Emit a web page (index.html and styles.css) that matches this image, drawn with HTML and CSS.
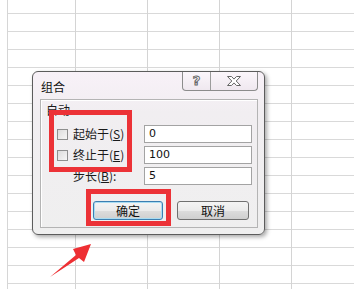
FILE: index.html
```html
<!DOCTYPE html>
<html lang="zh">
<head>
    <meta charset="utf-8">
    <title>组合</title>
    <link rel="stylesheet" href="styles.css">
</head>
<body>
    <div class="screen">
        <div class="sheet"></div>

        <section class="dialog">
            <div class="titlebar">
                <span class="title">组合</span>
                <div class="title_buttons">
                    <span class="help">?</span>
                    <span class="close">
                        <svg width="16" height="10" viewBox="0 0 16 10">
                            <path d="M1.5 0.5h4l2.5 2.6 2.5-2.6h4l-4.3 4.5 4.3 4.5h-4l-2.5-2.6-2.5 2.6h-4l4.3-4.5z" fill="#fff" stroke="#666" stroke-width="1"/>
                        </svg>
                    </span>
                </div>
            </div>

            <div class="group">
                <div class="legend">自动</div>
                <div class="rows">
                    <label class="check"><span class="box"></span>起始于(<u>S</u>)</label>
                    <div class="field">0</div>
                    <label class="check"><span class="box"></span>终止于(<u>E</u>)</label>
                    <div class="field">100</div>
                    <label class="plain">步长(<u>B</u>):</label>
                    <div class="field">5</div>
                </div>
                <div class="actions">
                    <button class="btn ok">确定</button>
                    <button class="btn">取消</button>
                </div>
            </div>
        </section>

        <div class="mark mark_checks"></div>
        <div class="mark mark_ok"></div>

        <svg class="arrow" width="50" height="42" viewBox="0 0 50 42">
            <polygon points="5,37 31,15 28,9 46,4 39,22 34,18" fill="#ee2f33"/>
        </svg>
    </div>
</body>
</html>
```

FILE: styles.css
```css
* {
    box-sizing: border-box;
}

body {
    margin: 0;
    background-color: #fff;
    font-family: "Noto Sans CJK SC", "Liberation Sans", sans-serif;
    font-size: 12px;
    color: #1a1a1a;
}

.screen {
    position: relative;
    width: 354px;
    height: 289px;
    overflow: hidden;
    padding-left: 7px;
}

.sheet {
    height: 289px;
    border-left: 1px solid #d6d6d6;
    background-image:
        linear-gradient(to right, #d4d4d4 1px, transparent 1px),
        linear-gradient(to bottom, #d9d9d9 1px, transparent 1px);
    background-size: 72px 100%, 100% 18px;
    background-position: 67px 0, 0 13px;
}

.dialog {
    position: absolute;
    left: 32px;
    top: 71px;
    width: 233px;
    height: 164px;
    border: 1px solid #5c5c5c;
    border-radius: 6px;
    background: linear-gradient(#f8f1f8, #f1eef1 40px, #efefef);
    box-shadow: 2px 2px 4px rgba(0, 0, 0, 0.35);
}

.titlebar {
    height: 27px;
    display: flex;
    justify-content: space-between;
    align-items: flex-start;
    padding: 0 6px 0 8px;
}

.title {
    padding-top: 8px;
    line-height: 14px;
    color: #111;
}

.title_buttons {
    display: flex;
    height: 19px;
    border: 1px solid #8c8c8c;
    border-top: none;
    border-radius: 0 0 4px 4px;
    background: linear-gradient(#fbf6fb, #efe8ef);
}

.help {
    width: 28px;
    border-right: 1px solid #9c9c9c;
    text-align: center;
    font-family: "DejaVu Sans", sans-serif;
    font-weight: bold;
    font-size: 13px;
    line-height: 17px;
    color: #fff;
    -webkit-text-stroke: 1px #666;
}

.close {
    width: 46px;
    display: flex;
    align-items: center;
    justify-content: center;
}

.group {
    height: 129px;
    margin: 0 6px 0 7px;
    border: 1px solid #b4b4b4;
    box-shadow: inset 1px 1px 0 #fff;
}

.legend {
    padding: 3px 0 0 5px;
    line-height: 14px;
}

.rows {
    display: grid;
    grid-template-columns: 87px 108px;
    grid-auto-rows: 18px;
    row-gap: 3px;
    margin-top: 8px;
    padding-left: 16px;
}

.check,
.plain {
    display: flex;
    align-items: center;
    line-height: 14px;
}

.plain {
    padding-left: 16px;
}

.box {
    width: 11px;
    height: 11px;
    margin-right: 5px;
    border: 1px solid #8e8f8f;
    background: linear-gradient(135deg, #dcdcdc, #f6f6f6);
}

.field {
    border: 1px solid #a3a3a3;
    background-color: #fff;
    padding-left: 4px;
    font-family: "DejaVu Sans", sans-serif;
    font-size: 11px;
    line-height: 16px;
    color: #111;
}

.actions {
    display: flex;
    gap: 14px;
    margin-top: 16px;
    padding-left: 52px;
}

.btn {
    width: 72px;
    height: 19px;
    padding: 0;
    border: 1px solid #707070;
    border-radius: 3px;
    background: linear-gradient(#f4f4f4, #ebebeb 50%, #dddddd 51%, #cfcfcf);
    font-family: "Noto Sans CJK SC", sans-serif;
    font-size: 12px;
    line-height: 16px;
    color: #111;
}

.ok {
    width: 70px;
    border-color: #3c7fb1;
    box-shadow: inset 0 0 0 1px #a9dcf2;
}

.mark {
    position: absolute;
    border: 5px solid #ec3237;
}

.mark_checks {
    left: 49px;
    top: 110px;
    width: 83px;
    height: 62px;
}

.mark_ok {
    left: 86px;
    top: 189px;
    width: 85px;
    height: 37px;
}

.arrow {
    position: absolute;
    left: 45px;
    top: 240px;
}
```
